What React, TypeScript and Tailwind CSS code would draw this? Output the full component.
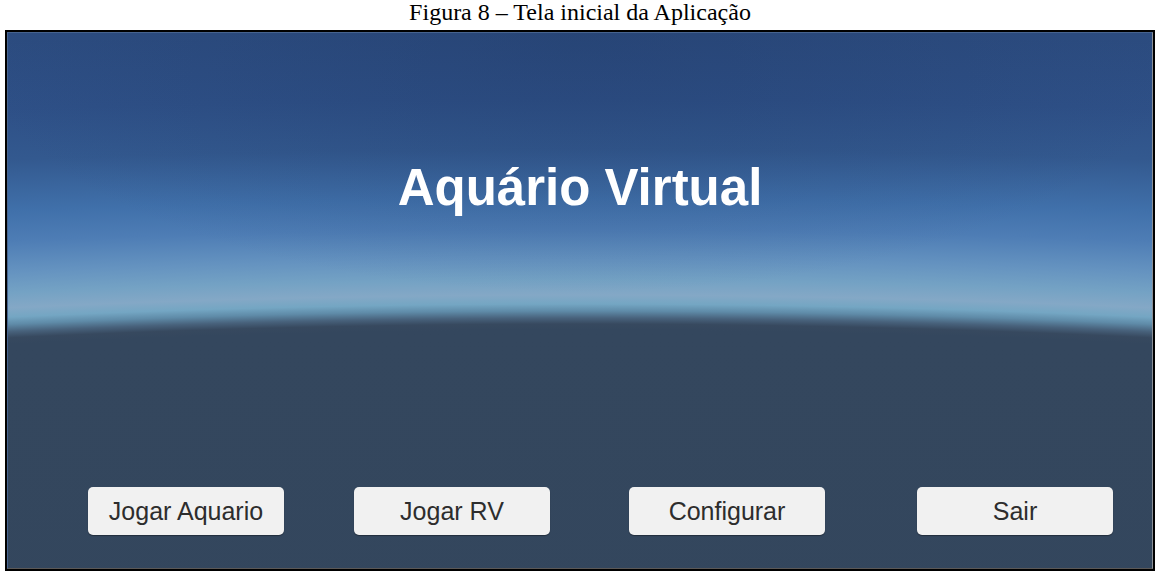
const buttons = [
  { label: 'Jogar Aquario', gap: 'ml-[80px]' },
  { label: 'Jogar RV', gap: 'ml-[70px]' },
  { label: 'Configurar', gap: 'ml-[79px]' },
  { label: 'Sair', gap: 'ml-[92px]' },
];

export default function App() {
  return (
    <div className="w-[1160px] h-[576px] bg-white overflow-hidden">
      <p className="text-center text-[24px] leading-none text-black font-['Liberation_Serif','Times_New_Roman',serif]">
        Figura 8 – Tela inicial da Aplicação
      </p>

      <div className="ml-[5px] mt-[6px] w-[1150px] h-[541px] border-2 border-black">
        <div className="h-full w-full border border-[#46638f] border-b-[#5b5856] border-r-[#8a8f96]">
          <div className="flex h-full flex-col bg-[radial-gradient(ellipse_620px_260px_at_50%_0px,rgba(30,55,100,0.35),transparent),radial-gradient(ellipse_2200px_400px_at_50%_688px,#33465d_0%,#34475e_97.75%,#37495f_99.25%,#48627c_100.75%,#5f8ba8_102.5%,#74a6c3_104.25%,#84a8c6_106.5%,#74a2c4_110.25%,#6593c0_115.25%,#4e7db5_122.75%,#4070aa_130.25%,#33598f_142.75%,#2e5087_155.25%,#2c4c80_172%)]">
            <h1 className="pt-[129px] text-center text-[51px] leading-none font-bold text-white font-['Liberation_Sans',Arial,sans-serif]">
              Aquário Virtual
            </h1>

            <div className="mt-auto flex pb-[33px]">
              {buttons.map((b) => (
                <button
                  key={b.label}
                  className={`${b.gap} flex h-[48px] w-[196px] items-center justify-center rounded-[5px] bg-[#f1f1f1] pt-[2px] text-[25px] text-[#2d2d2d] shadow-[0_1px_1px_rgba(0,0,0,0.35)] font-['Liberation_Sans',Arial,sans-serif]`}
                >
                  {b.label}
                </button>
              ))}
            </div>
          </div>
        </div>
      </div>
    </div>
  );
}
